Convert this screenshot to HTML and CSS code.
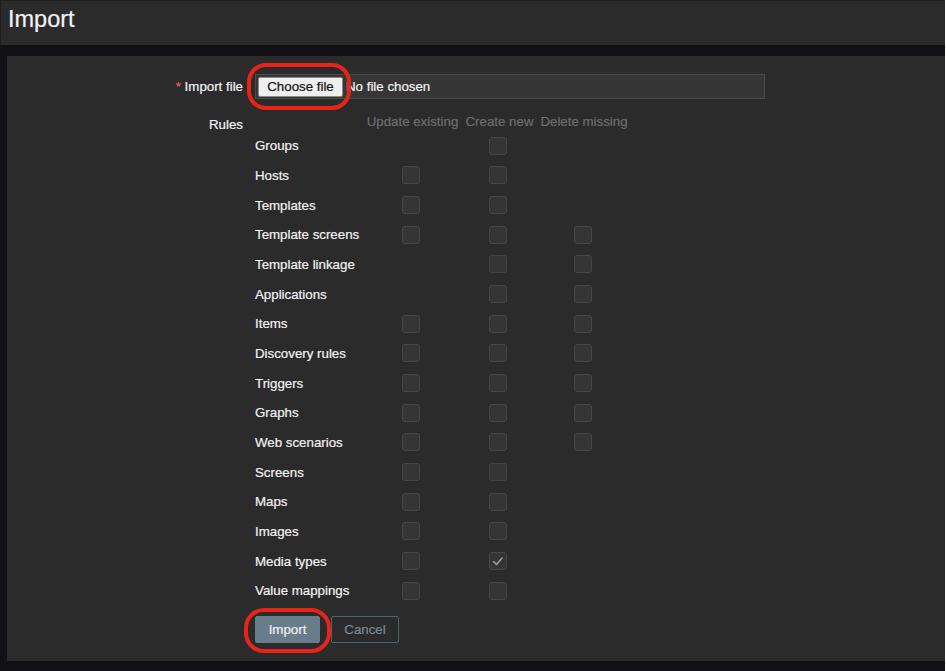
FILE: index.html
```html
<!DOCTYPE html>
<html>
<head>
<meta charset="utf-8">
<title>Import</title>
<link rel="stylesheet" href="styles.css">
</head>
<body>
<div class="page">
  <header class="header"><h1 class="title">Import</h1></header>
  <main class="panel">
    <div class="form-row">
      <div class="label"><span class="req">*</span> Import file</div>
      <div class="control">
        <div class="file-field">
          <span class="file-btn">Choose file<span class="ring ring-file"></span></span>
          <span class="file-text">No file chosen</span>
        </div>
      </div>
    </div>
    <div class="form-row rules-row">
      <div class="label label-rules">Rules</div>
      <div class="control">
        <div class="rules">
          <div class="rhead"></div><div class="rhead">Update existing</div><div class="rhead">Create new</div><div class="rhead">Delete missing</div>

          <div class="rname">Groups</div><div class="cell"></div><div class="cell"><span class="cb"></span></div><div class="cell"></div>
          <div class="rname">Hosts</div><div class="cell"><span class="cb"></span></div><div class="cell"><span class="cb"></span></div><div class="cell"></div>
          <div class="rname">Templates</div><div class="cell"><span class="cb"></span></div><div class="cell"><span class="cb"></span></div><div class="cell"></div>
          <div class="rname">Template screens</div><div class="cell"><span class="cb"></span></div><div class="cell"><span class="cb"></span></div><div class="cell"><span class="cb"></span></div>
          <div class="rname">Template linkage</div><div class="cell"></div><div class="cell"><span class="cb"></span></div><div class="cell"><span class="cb"></span></div>
          <div class="rname">Applications</div><div class="cell"></div><div class="cell"><span class="cb"></span></div><div class="cell"><span class="cb"></span></div>
          <div class="rname">Items</div><div class="cell"><span class="cb"></span></div><div class="cell"><span class="cb"></span></div><div class="cell"><span class="cb"></span></div>
          <div class="rname">Discovery rules</div><div class="cell"><span class="cb"></span></div><div class="cell"><span class="cb"></span></div><div class="cell"><span class="cb"></span></div>
          <div class="rname">Triggers</div><div class="cell"><span class="cb"></span></div><div class="cell"><span class="cb"></span></div><div class="cell"><span class="cb"></span></div>
          <div class="rname">Graphs</div><div class="cell"><span class="cb"></span></div><div class="cell"><span class="cb"></span></div><div class="cell"><span class="cb"></span></div>
          <div class="rname">Web scenarios</div><div class="cell"><span class="cb"></span></div><div class="cell"><span class="cb"></span></div><div class="cell"><span class="cb"></span></div>
          <div class="rname">Screens</div><div class="cell"><span class="cb"></span></div><div class="cell"><span class="cb"></span></div><div class="cell"></div>
          <div class="rname">Maps</div><div class="cell"><span class="cb"></span></div><div class="cell"><span class="cb"></span></div><div class="cell"></div>
          <div class="rname">Images</div><div class="cell"><span class="cb"></span></div><div class="cell"><span class="cb"></span></div><div class="cell"></div>
          <div class="rname">Media types</div><div class="cell"><span class="cb"></span></div><div class="cell"><span class="cb checked"><svg width="18" height="18" viewBox="0 0 18 18"><polyline points="4.5,9.5 7.5,12.5 13,6" fill="none" stroke="#8ea3b0" stroke-width="1.6" stroke-linecap="round" stroke-linejoin="round"/></svg></span></div><div class="cell"></div>
          <div class="rname">Value mappings</div><div class="cell"><span class="cb"></span></div><div class="cell"><span class="cb"></span></div><div class="cell"></div>
        </div>
        <div class="buttons">
          <span class="btn btn-primary">Import<span class="ring ring-import"></span></span>
          <span class="btn btn-secondary">Cancel</span>
        </div>
      </div>
    </div>
  </main>
</div>
</body>
</html>
```
FILE: styles.css
```css
html, body {
  margin: 0;
  padding: 0;
  background: #ffffff;
}
body {
  font-family: "Liberation Sans", Arial, sans-serif;
  font-size: 13.3px;
  color: #f2f2f2;
  -webkit-text-stroke: 0.2px;
}
.page {
  width: 945px;
  height: 671px;
  background: #111115;
  display: flex;
  flex-direction: column;
}
.header {
  height: 44px;
  background: #2b2b2b;
  border-top: 1px solid #1e1e1e;
  border-left: 1px solid #1e1e1e;
  box-sizing: content-box;
  display: flex;
  align-items: center;
}
.title {
  margin: 0 0 0 7px;
  font-size: 23.5px;
  font-weight: normal;
  color: #f2f2f2;
  line-height: 28px;
  position: relative;
  top: -4px;
}
.panel {
  margin: 11px 0 0 7px;
  height: 605px;
  background: #2b2b2b;
  padding-top: 18px;
  box-sizing: border-box;
}
.form-row {
  display: flex;
  gap: 12px;
}
.label {
  width: 236px;
  text-align: right;
  flex: none;
  line-height: 25px;
  color: #f2f2f2;
}
.req {
  color: #e45959;
  margin-right: 0;
}
.control {
  display: flex;
  flex-direction: column;
}
.file-field {
  width: 510px;
  height: 25px;
  box-sizing: border-box;
  background: #363636;
  border: 1px solid #4a4a4a;
  display: flex;
  align-items: center;
  padding-left: 2px;
}
.file-btn {
  position: relative;
  width: 85px;
  height: 20px;
  box-sizing: border-box;
  background: #efefef;
  border: 1px solid #8a8a8a;
  border-radius: 2px;
  color: #111;
  display: flex;
  align-items: center;
  justify-content: center;
}
.file-text {
  margin-left: 3px;
  color: #f2f2f2;
}
.ring {
  position: absolute;
  box-sizing: border-box;
  border: 4px solid #e8231a;
  pointer-events: none;
}
.ring-file {
  left: -12px;
  top: -15px;
  width: 104px;
  height: 47px;
  border-radius: 19px;
}
.ring-import {
  left: -12px;
  top: -9px;
  width: 87px;
  height: 45px;
  border-radius: 20px;
}
.rules-row {
  margin-top: 13px;
}
.label-rules {
  line-height: 16px;
  padding-top: 5px;
}
.rules {
  display: grid;
  grid-template-columns: 108px 99px 75px 94px;
  grid-template-rows: 19px repeat(16, 29.67px);
  align-items: center;
}
.rhead {
  text-align: center;
  color: #6e6e6e;
  line-height: 19px;
}
.rname {
  color: #f2f2f2;
}
.cell {
  display: flex;
  justify-content: center;
  padding-right: 3px;
}
.cb {
  width: 18px;
  height: 18px;
  box-sizing: border-box;
  background: #353535;
  border: 1px solid #464646;
  border-radius: 3px;
  display: block;
  position: relative;
}
.cb svg {
  position: absolute;
  left: -1px;
  top: -1px;
}
.buttons {
  display: flex;
  gap: 11px;
  margin-top: 10px;
}
.btn {
  position: relative;
  height: 27px;
  box-sizing: border-box;
  display: flex;
  align-items: center;
  justify-content: center;
  border-radius: 2px;
}
.btn-primary {
  width: 65px;
  background: #687d89;
  border: 1px solid #687d89;
  color: #eef2f4;
}
.btn-secondary {
  width: 68px;
  background: transparent;
  border: 1px solid #50646f;
  color: #768a95;
}
```
